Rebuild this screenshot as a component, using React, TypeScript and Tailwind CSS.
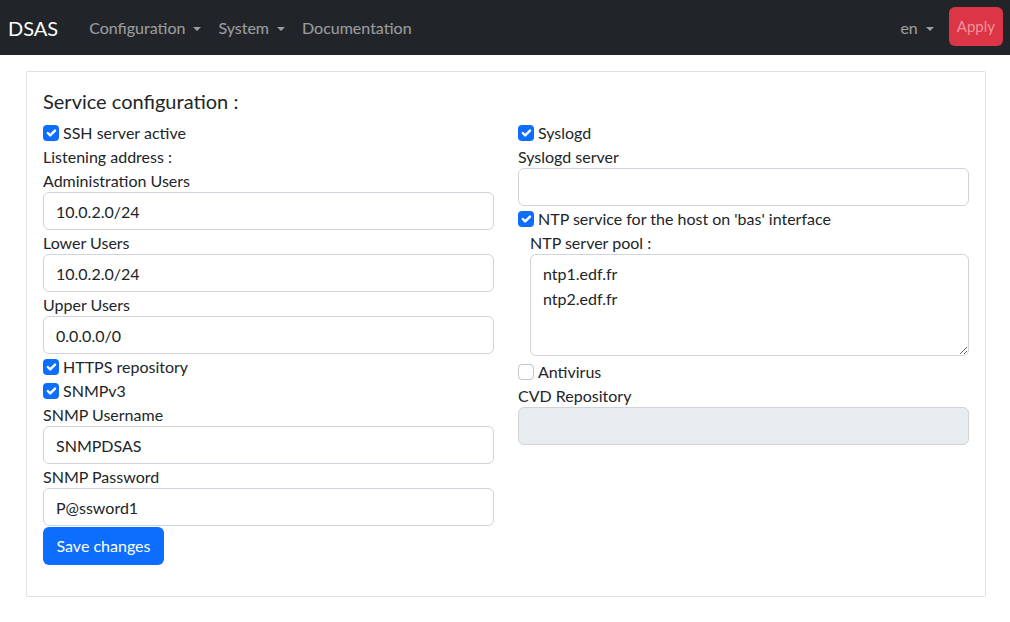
import React from "react";

const FONT = { fontFamily: '"Segoe UI", Lato, "Noto Sans", sans-serif' };

function Caret() {
  return (
    <span className="ml-[8px] inline-block h-0 w-0 border-x-[4px] border-t-[4.8px] border-x-transparent border-t-current align-[3px]" />
  );
}

function Check({ checked, label, className = "" }: { checked?: boolean; label: string; className?: string }) {
  return (
    <label className={"flex h-6 items-center gap-[4px] text-[16px] text-[#212529] " + className}>
      {checked ? (
        <span className="flex h-4 w-4 items-center justify-center rounded-[4px] bg-[#0d6efd]">
          <svg viewBox="0 0 20 20" className="h-4 w-4">
            <path
              d="M6 10l3 3 6-6"
              fill="none"
              stroke="#fff"
              strokeWidth="3"
              strokeLinecap="round"
              strokeLinejoin="round"
            />
          </svg>
        </span>
      ) : (
        <span className="h-4 w-4 rounded-[4px] border border-[#bfc5cc] bg-white" />
      )}
      {label}
    </label>
  );
}

function Label({ children, className = "" }: { children: React.ReactNode; className?: string }) {
  return <div className={"h-6 text-[16px] leading-6 text-[#212529] " + className}>{children}</div>;
}

function Input({ value = "", disabled }: { value?: string; disabled?: boolean }) {
  return (
    <input
      defaultValue={value}
      disabled={disabled}
      className={
        "-mt-px mb-px block h-[38px] w-full rounded-[6px] border border-[#ced4da] px-3 text-[16px] text-[#212529] outline-none " +
        (disabled ? "bg-[#e9ecef]" : "bg-white")
      }
      style={FONT}
    />
  );
}

export default function App() {
  return (
    <div className="min-h-[622px] bg-white" style={FONT}>
      <nav className="flex h-[55px] items-center bg-[#212529] pl-2 pr-[7px]">
        <span className="mr-[31px] text-[20px] text-white">DSAS</span>
        <div className="flex items-center gap-[17px] text-[16px] text-white/55">
          <span>
            Configuration
            <Caret />
          </span>
          <span>
            System
            <Caret />
          </span>
          <span>Documentation</span>
        </div>
        <div className="ml-auto flex items-center gap-[15px]">
          <span className="text-[16px] text-white/55">
            en
            <Caret />
          </span>
          <button className="mb-[2px] h-[39px] rounded-[6px] bg-[#dc3545] px-[8px] text-[15px] text-[#f1939c]" style={FONT}>
            Apply
          </button>
        </div>
      </nav>

      <div className="ml-[26px] mt-4 w-[960px]">
        <div className="rounded-[2px] border border-[#dee2e6] px-4 pb-[31px] pt-[17px]">
          <h5 className="mb-2 text-[20px] leading-6 text-[#212529]">Service configuration :</h5>
          <div className="grid grid-cols-2 gap-6">
            <div className="flex flex-col">
              <Check checked label="SSH server active" />
              <Label>Listening address :</Label>
              <Label>Administration Users</Label>
              <Input value="10.0.2.0/24" />
              <Label>Lower Users</Label>
              <Input value="10.0.2.0/24" />
              <Label>Upper Users</Label>
              <Input value="0.0.0.0/0" />
              <Check checked label="HTTPS repository" />
              <Check checked label="SNMPv3" />
              <Label>SNMP Username</Label>
              <Input value="SNMPDSAS" />
              <Label>SNMP Password</Label>
              <Input value="P@ssword1" />
              <div>
                <button className="h-[38px] rounded-[6px] bg-[#0d6efd] px-[13.5px] text-[16px] text-white" style={FONT}>
                  Save changes
                </button>
              </div>
            </div>
            <div className="flex flex-col">
              <Check checked label="Syslogd" />
              <Label>Syslogd server</Label>
              <Input />
              <Check checked label="NTP service for the host on 'bas' interface" />
              <div className="pl-3">
                <Label>NTP server pool :</Label>
                <textarea
                  defaultValue={"ntp1.edf.fr\nntp2.edf.fr"}
                  className="-mt-px block h-[102px] w-full rounded-[6px] border border-[#ced4da] px-3 py-[6px] text-[16px] leading-[25px] text-[#212529] outline-none"
                  style={FONT}
                />
              </div>
              <Check label="Antivirus" className="mt-[4px]" />
              <Label>CVD Repository</Label>
              <Input disabled />
            </div>
          </div>
        </div>
      </div>
    </div>
  );
}
